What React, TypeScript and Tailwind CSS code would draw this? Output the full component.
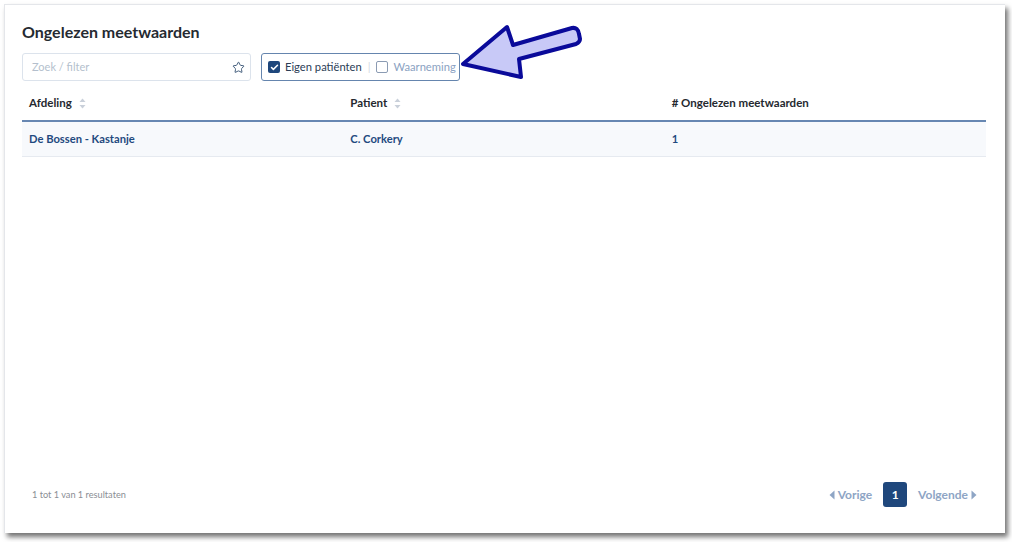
import * as React from "react";
import { Star, Check } from "lucide-react";

function SortIcon() {
  return (
    <svg width="7" height="11" viewBox="0 0 7 11" className="ml-[7px]">
      <path d="M3.5 0.5 L6.5 4 L0.5 4 Z" fill="#c9d0da" />
      <path d="M3.5 10.5 L6.5 7 L0.5 7 Z" fill="#c9d0da" />
    </svg>
  );
}

function Caret({ dir }: { dir: "left" | "right" }) {
  return (
    <svg width="6" height="10" viewBox="0 0 6 10">
      {dir === "left" ? (
        <path d="M5.5 0.5 L5.5 9.5 L0.5 5 Z" fill="#8ea5c5" />
      ) : (
        <path d="M0.5 0.5 L0.5 9.5 L5.5 5 Z" fill="#8ea5c5" />
      )}
    </svg>
  );
}

export default function App() {
  const rows = [
    { afdeling: "De Bossen - Kastanje", patient: "C. Corkery", count: "1" },
  ];

  return (
    <div
      className="relative w-[1012px] h-[542px] bg-white p-1"
      style={{ fontFamily: "Lato, 'Open Sans', sans-serif" }}
    >
      <div className="w-[1001px] h-[529px] bg-white border-l border-t border-[#e4e6ea] shadow-[3px_4px_5px_rgba(0,0,0,0.55)] flex flex-col pl-[17px] pr-[18px] pt-[16px]">
        <h1 className="text-[16px] leading-[22px] font-bold text-[#252a31]">
          Ongelezen meetwaarden
        </h1>

        {/* --- FILTERS --- */}
        <div className="mt-[10px] flex items-center gap-[10px]">
          <div className="w-[229px] h-[28px] shrink-0 border border-[#dce3ec] rounded-[3px] flex items-center justify-between pl-[9px] pr-[5px]">
            <span className="text-[11px] text-[#b4bfcd]">Zoek / filter</span>
            <Star className="w-[13px] h-[13px] text-[#3e5878]" strokeWidth={1.8} />
          </div>
          <div className="w-[199px] h-[28px] shrink-0 whitespace-nowrap border border-[#6585ae] rounded-[3px] flex items-center pl-[6px]">
            <span className="w-[12px] h-[12px] shrink-0 rounded-[2px] bg-[#1f477c] flex items-center justify-center">
              <Check className="w-[9px] h-[9px] text-white" strokeWidth={4} />
            </span>
            <span className="ml-[5px] text-[11.2px] text-[#2b3d56]">Eigen patiënten</span>
            <span className="ml-[6px] text-[11px] text-[#d3d9e2]">|</span>
            <span className="ml-[6px] w-[12px] h-[12px] shrink-0 rounded-[2px] border border-[#8b9bb3] bg-white" />
            <span className="ml-[5px] text-[11.2px] text-[#8ba2c2]">Waarneming</span>
          </div>
        </div>

        {/* --- TABLE --- */}
        <div className="mt-[5px] w-[964px]">
          <div className="grid grid-cols-3 h-[36px] border-b-2 border-[#6787b2] items-center text-[11.5px] font-bold text-[#25292f]">
            <div className="pl-[7px] flex items-center">
              Afdeling
              <SortIcon />
            </div>
            <div className="pl-[7px] flex items-center">
              Patient
              <SortIcon />
            </div>
            <div className="pl-[7px] flex items-center">
              # Ongelezen meetwaarden
            </div>
          </div>
          {rows.map((r) => (
            <div
              key={r.afdeling}
              className="grid grid-cols-3 h-[35px] items-center bg-[#f7f9fc] border-b border-[#e6eaf0] text-[11.2px] font-bold text-[#1f4a7f]"
            >
              <div className="pl-[7px]">{r.afdeling}</div>
              <div className="pl-[7px]">{r.patient}</div>
              <div className="pl-[7px]">{r.count}</div>
            </div>
          ))}
        </div>

        <div className="flex-1" />

        {/* --- FOOTER --- */}
        <div className="flex items-center justify-between pb-[26px] pl-[10px] pr-[10px]">
          <span className="text-[9.2px] text-[#8a8e94]">1 tot 1 van 1 resultaten</span>
          <div className="flex items-center text-[12px] font-bold text-[#8ea5c5]">
            <span className="flex items-center gap-[3px]">
              <Caret dir="left" />
              Vorige
            </span>
            <span className="ml-[11px] w-[24px] h-[25px] rounded-[3px] bg-[#1f477c] text-white flex items-center justify-center">
              1
            </span>
            <span className="ml-[11px] flex items-center gap-[3px]">
              Volgende
              <Caret dir="right" />
            </span>
          </div>
        </div>
      </div>

      {/* --- ANNOTATION ARROW --- */}
      <svg
        className="absolute left-[455px] top-[20px]"
        width="135"
        height="65"
        viewBox="0 0 135 65"
      >
        <path
          d="M8 44 L52 7 L58 25 L117 8 Q123 7 124 14 L125 19 Q125 22 121 24 L64 39 L66 57 Z"
          fill="#c8c9f7"
          stroke="#0a0a9a"
          strokeWidth="4"
          strokeLinejoin="round"
        />
      </svg>
    </div>
  );
}
